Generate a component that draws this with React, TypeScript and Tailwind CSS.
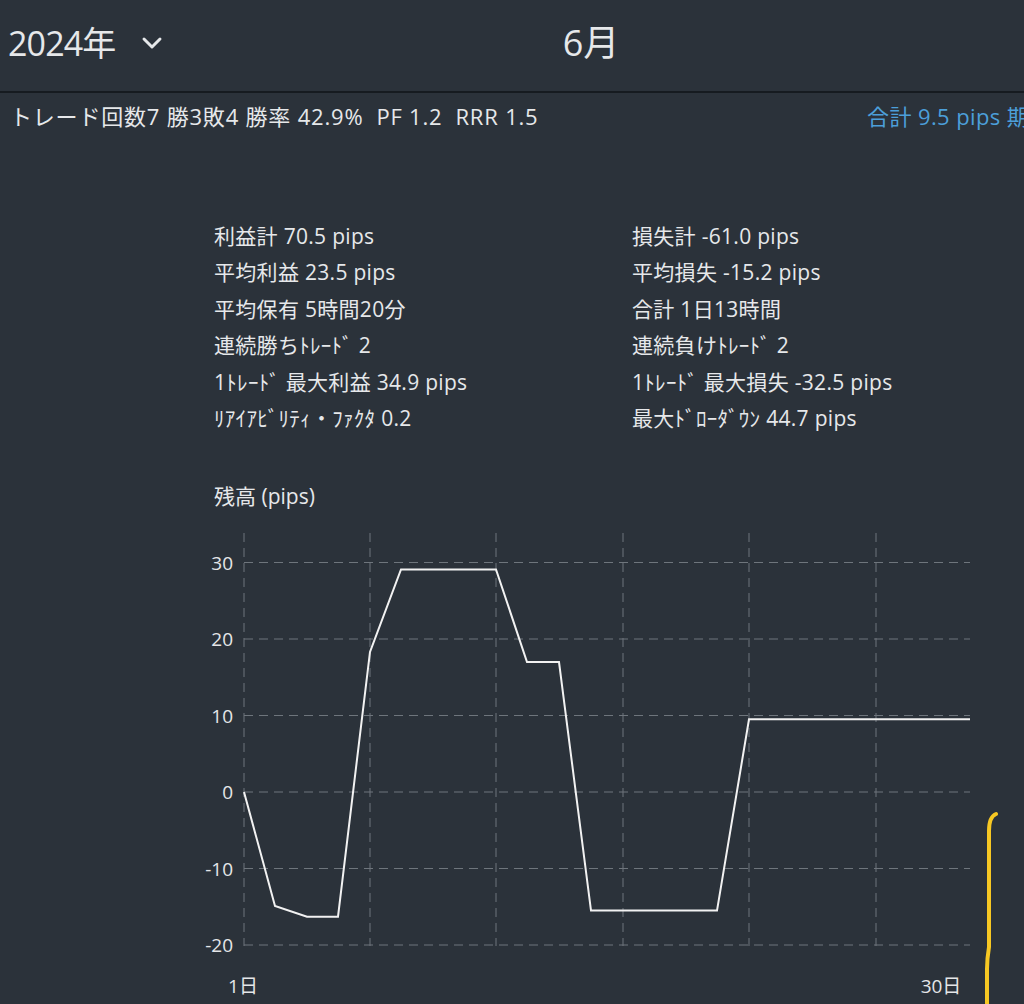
import React from 'react'
import { ChevronDown } from 'lucide-react'

const font = { fontFamily: '"Open Sans", "Noto Sans CJK JP", sans-serif' }

const leftStats = [
    '利益計 70.5 pips',
    '平均利益 23.5 pips',
    '平均保有 5時間20分',
    '連続勝ちﾄﾚｰﾄﾞ 2',
    '1ﾄﾚｰﾄﾞ 最大利益 34.9 pips',
    'ﾘｱｲｱﾋﾞﾘﾃｨ・ﾌｧｸﾀ 0.2',
]

const rightStats = [
    '損失計 -61.0 pips',
    '平均損失 -15.2 pips',
    '合計 1日13時間',
    '連続負けﾄﾚｰﾄﾞ 2',
    '1ﾄﾚｰﾄﾞ 最大損失 -32.5 pips',
    '最大ﾄﾞﾛｰﾀﾞｳﾝ 44.7 pips',
]

// chart coords (page pixels)
const X0 = 244
const X1 = 970
const yOf = (v: number) => 791 - v * 7.65
const yTicks = [30, 20, 10, 0, -10, -20]
const xGrid = [244, 370, 496, 623, 749, 876]

const points: [number, number][] = [
    [244, 0],
    [275, -14.9],
    [307, -16.3],
    [338, -16.3],
    [370, 18.3],
    [401, 29.1],
    [496, 29.1],
    [527, 17],
    [559, 17],
    [591, -15.5],
    [717, -15.5],
    [749, 9.5],
    [970, 9.5],
]

const Chart = () => {
    const line = points.map(([x, v]) => `${x},${yOf(v).toFixed(1)}`).join(' ')
    return (
        <svg width={1024} height={484} className="block" style={font}>
            <g transform="translate(0,-520)">
                {yTicks.map((t) => (
                    <g key={t}>
                        <line
                            x1={X0}
                            x2={X1}
                            y1={yOf(t)}
                            y2={yOf(t)}
                            stroke="#6e757c"
                            strokeWidth={1}
                            strokeDasharray="9 6"
                        />
                        <text
                            x={233}
                            y={yOf(t) + 7}
                            textAnchor="end"
                            fontSize={19}
                            fill="#e4e6e8"
                        >
                            {t}
                        </text>
                    </g>
                ))}
                {xGrid.map((x) => (
                    <line
                        key={x}
                        x1={x}
                        x2={x}
                        y1={532}
                        y2={945}
                        stroke="#6e757c"
                        strokeWidth={1}
                        strokeDasharray="9 6"
                    />
                ))}
                <polyline points={line} fill="none" stroke="#f2f2f2" strokeWidth={2} strokeLinejoin="miter" />
                <text x={243} y={992} textAnchor="middle" fontSize={19} fill="#e4e6e8">1日</text>
                <text x={941} y={992} textAnchor="middle" fontSize={19} fill="#e4e6e8">30日</text>
                <path
                    d="M996 813 C991 815 989 820 989 830 L989 946 C988 952 987 958 987 968 L987 1010"
                    fill="none"
                    stroke="#f7c823"
                    strokeWidth={4}
                    strokeLinecap="round"
                />
            </g>
        </svg>
    )
}

export default function App() {
    return (
        <div className="w-[1024px] h-[1004px] overflow-hidden bg-[#2b323a] text-[#e6e8ea]" style={font}>
            <div className="w-[1182px]">
                {/* Header */}
                <div className="h-[93px] grid grid-cols-[1fr_auto_1fr] items-center border-b-2 border-[#161b20]">
                    <div className="flex items-center gap-[20px] pl-[8px] pb-[6px]">
                        <span className="text-[34px] leading-none tracking-tight">2024年</span>
                        <ChevronDown className="w-[32px] h-[32px]" strokeWidth={2.2} />
                    </div>
                    <div className="text-[36px] leading-none pb-[6px]">6月</div>
                    <div />
                </div>

                {/* Summary */}
                <div className="h-[46px] flex items-center text-[22px] whitespace-nowrap">
                    <span className="pl-[10px] tracking-[0.8px]">トレード回数7 勝3敗4 勝率 42.9%&nbsp;&nbsp;PF 1.2&nbsp;&nbsp;RRR 1.5</span>
                    <span className="ml-auto w-[315px] text-[#4c9fd9] tracking-[0.4px]">合計 9.5 pips 期間</span>
                </div>
            </div>

            {/* Stats */}
            <div className="pt-[79px] pl-[214px] grid grid-cols-[418px_1fr] text-[21px] tracking-[0.3px] whitespace-nowrap">
                <div className="flex flex-col">
                    {leftStats.map((s) => (
                        <div key={s} className="h-[36.5px] flex items-center">{s}</div>
                    ))}
                </div>
                <div className="flex flex-col">
                    {rightStats.map((s) => (
                        <div key={s} className="h-[36.5px] flex items-center">{s}</div>
                    ))}
                </div>
            </div>

            <div className="pt-[46px] pl-[214px] h-[84px] text-[21px] leading-[26px]">残高 (pips)</div>

            <Chart />
        </div>
    )
}
